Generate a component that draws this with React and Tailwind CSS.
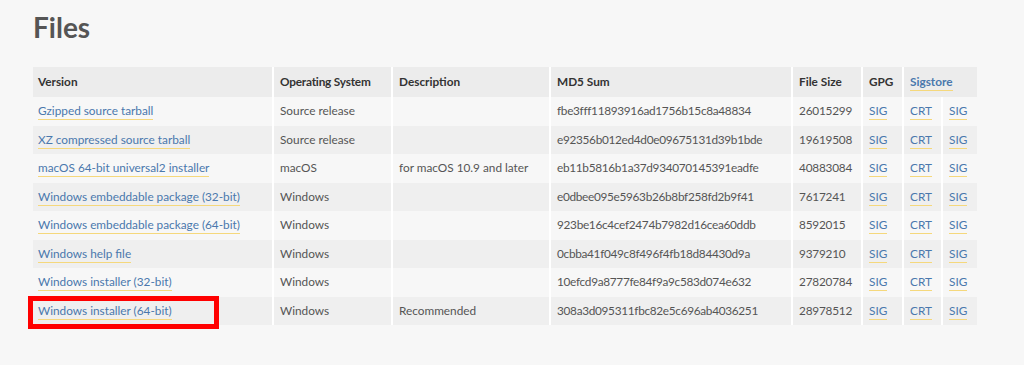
import React from "react";

const rows = [
  { name: "Gzipped source tarball", os: "Source release", desc: "", md5: "fbe3fff11893916ad1756b15c8a48834", size: "26015299" },
  { name: "XZ compressed source tarball", os: "Source release", desc: "", md5: "e92356b012ed4d0e09675131d39b1bde", size: "19619508" },
  { name: "macOS 64-bit universal2 installer", os: "macOS", desc: "for macOS 10.9 and later", md5: "eb11b5816b1a37d934070145391eadfe", size: "40883084" },
  { name: "Windows embeddable package (32-bit)", os: "Windows", desc: "", md5: "e0dbee095e5963b26b8bf258fd2b9f41", size: "7617241" },
  { name: "Windows embeddable package (64-bit)", os: "Windows", desc: "", md5: "923be16c4cef2474b7982d16cea60ddb", size: "8592015" },
  { name: "Windows help file", os: "Windows", desc: "", md5: "0cbba41f049c8f496f4fb18d84430d9a", size: "9379210" },
  { name: "Windows installer (32-bit)", os: "Windows", desc: "", md5: "10efcd9a8777fe84f9a9c583d074e632", size: "27820784" },
  { name: "Windows installer (64-bit)", os: "Windows", desc: "Recommended", md5: "308a3d095311fbc82e5c696ab4036251", size: "28978512", marked: true },
];

const Link = ({ children }) => (
  <a href="#" className="text-[#4a78ad] border-b border-[#f5d87c] pb-[1px]">
    {children}
  </a>
);

const App = () => {
  return (
    <div
      className="min-h-screen bg-[#f7f7f7] px-[33px] pt-[9px] pb-10 text-[#555]"
      style={{ fontFamily: "Lato, 'Open Sans', sans-serif" }}
    >
      <h1 className="text-[28px] font-bold leading-[36px] text-[#555]">Files</h1>

      <table className="mt-[22px] w-[944px] table-fixed border-collapse text-[11.8px]">
        <colgroup>
          <col className="w-[240px]" />
          <col className="w-[119px]" />
          <col className="w-[158px]" />
          <col className="w-[242px]" />
          <col className="w-[70px]" />
          <col className="w-[41px]" />
          <col className="w-[39px]" />
          <col className="w-[35px]" />
        </colgroup>
        <thead>
          <tr className="h-[30px] bg-[#ececec] text-left text-[#333]">
            <th className="px-[5px] font-bold">Version</th>
            <th className="border-l-2 border-white px-[6px] font-bold tracking-[-0.2px]">Operating System</th>
            <th className="border-l-2 border-white px-[6px] font-bold">Description</th>
            <th className="border-l-2 border-white px-[6px] font-bold">MD5 Sum</th>
            <th className="border-l-2 border-white px-[6px] font-bold">File Size</th>
            <th className="border-l-2 border-white px-[6px] font-bold">GPG</th>
            <th colSpan={2} className="border-l-2 border-white px-[6px] font-bold">
              <Link>Sigstore</Link>
            </th>
          </tr>
        </thead>
        <tbody>
          {rows.map((r, i) => (
            <tr key={r.name} className={`h-[28.5px] ${i % 2 === 1 ? "bg-[#efefef]" : "bg-[#f7f7f7]"}`}>
              <td className="relative px-[5px]">
                <Link>{r.name}</Link>
                {r.marked && (
                  <div className="absolute left-[-5px] top-[-1px] h-[33px] w-[191px] border-[5px] border-[#ff0000]" />
                )}
              </td>
              <td className="border-l-2 border-white px-[6px]">{r.os}</td>
              <td className="border-l-2 border-white px-[6px]">{r.desc}</td>
              <td className="border-l-2 border-white px-[6px] tracking-[-0.3px]">{r.md5}</td>
              <td className="border-l-2 border-white px-[6px] tracking-[-0.2px]">{r.size}</td>
              <td className="border-l-2 border-white px-[6px]">
                <Link>SIG</Link>
              </td>
              <td className="border-l-2 border-white px-[6px]">
                <Link>CRT</Link>
              </td>
              <td className="border-l-2 border-white px-[6px]">
                <Link>SIG</Link>
              </td>
            </tr>
          ))}
        </tbody>
      </table>
    </div>
  );
};

export default App;
